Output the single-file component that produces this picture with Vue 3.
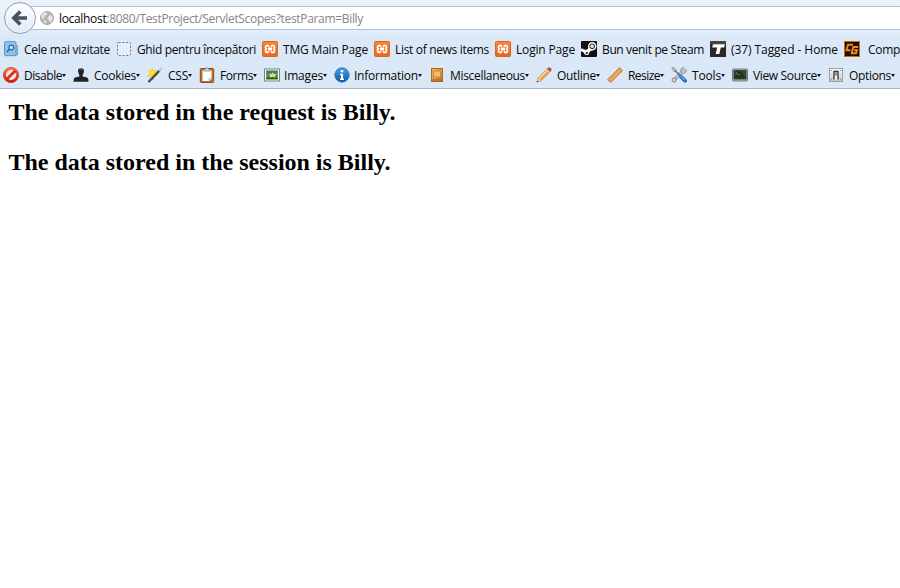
<script setup>
const bookmarks = [
  { icon: 'visited', label: 'Cele mai vizitate', pitch: 113, text: 86 },
  { icon: 'dashed', label: 'Ghid pentru începători', pitch: 146, text: 119 },
  { icon: 'xampp', label: 'TMG Main Page', pitch: 112, text: 85 },
  { icon: 'xampp', label: 'List of news items', pitch: 121, text: 94 },
  { icon: 'xampp', label: 'Login Page', pitch: 86, text: 59 },
  { icon: 'steam', label: 'Bun venit pe Steam', pitch: 129, text: 102 },
  { icon: 'tagged', label: '(37) Tagged - Home', pitch: 134, text: 107 },
  { icon: 'cg', label: 'Comp', pitch: 58, text: 32, gap: 8 },
]
const tools = [
  { icon: 'disable', label: 'Disable', pitch: 70, text: 38 },
  { icon: 'cookies', label: 'Cookies', pitch: 74, text: 42 },
  { icon: 'css', label: 'CSS', pitch: 52, text: 20 },
  { icon: 'forms', label: 'Forms', pitch: 65, text: 33 },
  { icon: 'images', label: 'Images', pitch: 70, text: 39, gap: 4 },
  { icon: 'info', label: 'Information', pitch: 95, text: 64, gap: 4 },
  { icon: 'misc', label: 'Miscellaneous', pitch: 107, text: 75 },
  { icon: 'outline', label: 'Outline', pitch: 71, text: 39 },
  { icon: 'resize', label: 'Resize', pitch: 64, text: 32 },
  { icon: 'tools', label: 'Tools', pitch: 61, text: 29 },
  { icon: 'source', label: 'View Source', pitch: 96, text: 64 },
  { icon: 'options', label: 'Options', pitch: 72, text: 42 },
]

// Tightens or loosens the tracking so a label fills its column width.
const vFit = {
  mounted(el, { value }) {
    const natural = el.getBoundingClientRect().width
    el.style.letterSpacing = `${(value - natural) / el.textContent.length}px`
  },
}
</script>

<template>
  <div class="window">
    <svg class="defs" width="0" height="0">
      <defs>
        <linearGradient id="orange" x2="0" y2="1"><stop stop-color="#f58a3c" /><stop offset="1" stop-color="#e8661b" /></linearGradient>
        <linearGradient id="red" x2="0" y2="1"><stop stop-color="#f47a5a" /><stop offset="1" stop-color="#d51f0c" /></linearGradient>
        <linearGradient id="blue" x2="0" y2="1"><stop stop-color="#4fa0e4" /><stop offset="1" stop-color="#0b55a9" /></linearGradient>
        <linearGradient id="wood" x2="1" y2="1"><stop stop-color="#f2b766" /><stop offset="1" stop-color="#c87820" /></linearGradient>
        <linearGradient id="silver" x2="0" y2="1"><stop stop-color="#fff" /><stop offset="1" stop-color="#bfc1c2" /></linearGradient>

        <symbol id="visited" viewBox="0 0 16 16">
          <path d="M12 4.500h2.500v9.500H12z" fill="#a9d1ee" stroke="#6fa9d5" />
          <rect x="1.500" y=".7" width="11.500" height="14" rx="1" fill="#8fc3e9" stroke="#5594c7" />
          <circle cx="8.300" cy="6.500" r="2.400" fill="#c5e3f7" stroke="#32689b" stroke-width="1.200" />
          <path d="M6.500 8.300L3.800 11" stroke="#32689b" stroke-width="1.600" />
        </symbol>
        <symbol id="dashed" viewBox="0 0 16 16">
          <rect x="1.500" y="1.500" width="13" height="13" rx="1" fill="#e5eef9" stroke="#75818f" stroke-dasharray="2.300 1.400" />
        </symbol>
        <symbol id="xampp" viewBox="0 0 16 16">
          <rect x=".5" y=".5" width="15" height="15" rx="1" fill="url(#orange)" stroke="#d9641e" />
          <path d="M6.600 6.200V5.500Q6.300 4.300 4.800 4.500Q3.300 4.900 3.500 6.500Q3.700 7.300 4.300 8Q3.700 8.700 3.500 9.500Q3.300 11.100 4.800 11.500Q6.300 11.700 6.600 10.500V9.800M9.400 6.200V5.500Q9.700 4.300 11.200 4.500Q12.700 4.900 12.500 6.500Q12.300 7.300 11.700 8Q12.300 8.700 12.500 9.500Q12.700 11.100 11.200 11.500Q9.700 11.700 9.400 10.500V9.800" fill="none" stroke="#fff" stroke-width="1.700" />
          <path d="M6 8H10" stroke="#fff" stroke-width="2.600" />
        </symbol>
        <symbol id="steam" viewBox="0 0 16 16">
          <rect width="16" height="16" rx="1" fill="#111" />
          <path d="M0 8.500L5.500 11" stroke="#fff" stroke-width="3" />
          <path d="M8 6L5 10.500L7.500 11.500L12 8.500Z" fill="#fff" />
          <circle cx="11.200" cy="5.200" r="3.500" fill="#111" stroke="#fff" stroke-width="1.500" />
          <circle cx="11.200" cy="5.200" r="1.900" fill="#ddd" />
          <circle cx="5.500" cy="11.300" r="2.200" fill="none" stroke="#fff" stroke-width="1.200" />
        </symbol>
        <symbol id="tagged" viewBox="0 0 16 16">
          <rect width="16" height="16" fill="#282828" /><path d="M0 0h16v3H0z" fill="#444" />
          <path d="M3 3.200h12l-.8 3.200h-3.400L9.300 13H5.700l1.500-6.600h-5z" fill="#fff" />
        </symbol>
        <symbol id="cg" viewBox="0 0 16 16">
          <rect x=".5" y=".5" width="15" height="15" fill="#17100a" stroke="#c96d0d" />
          <path d="M9 3.800H4L2.500 9.200H6.500M14.200 6H9.300L7.700 12.200H12L13 9.200H10.200" fill="none" stroke="#f18c16" stroke-width="1.900" />
        </symbol>
        <symbol id="disable" viewBox="0 0 16 16">
          <circle cx="8" cy="8" r="6.400" fill="#fbe9e5" stroke="url(#red)" stroke-width="2.700" />
          <path d="M3.700 12.300L12.300 3.700" stroke="#df2c18" stroke-width="2.700" />
          <circle cx="8" cy="8" r="7.600" fill="none" stroke="#be2b19" stroke-width=".6" />
        </symbol>
        <symbol id="cookies" viewBox="0 0 16 16">
          <path d="M5 3.500C5 .5 11 .5 11 3.500C11 6 10 7 9.700 8V9.500L14 10.500Q15.500 11 15.500 14.800H.5Q.5 11 2 10.500L6.300 9.500V8C6 7 5 6 5 3.500Z" fill="#242424" />
          <path d="M6.500 3.200Q8 1.500 9.500 3.200" fill="none" stroke="#555" />
        </symbol>
        <symbol id="css" viewBox="0 0 16 16">
          <path d="M5 .8l1.500 3 3.200-1-1.600 3.200 3 2-3.800.8L6 13 4 9.500 0 9.200 3 6.500 1.300 3l3.200.8z" fill="#ffdc3c" stroke="#f5b91c" stroke-width=".5" />
          <path d="M1.500 15L12.500 3.500" stroke="#38362e" stroke-width="2.300" />
          <path d="M12 4L14.800 1" stroke="#c9c9c4" stroke-width="2.300" />
          <path d="M1.500 14.500L10.500 4.700" stroke="#999" stroke-width=".6" />
        </symbol>
        <symbol id="forms" viewBox="0 0 16 16">
          <rect x="1.300" y="1.500" width="13.400" height="14" rx="1" fill="#c06e30" stroke="#91491b" />
          <path d="M3.500 3.500h9v8.500l-2.500 2H3.500z" fill="#fff" />
          <path d="M9.500 14v-3h3z" fill="#b8c4cf" />
          <path d="M5 4V2h1.700Q8-.8 9.300 2H11v2z" fill="#ddd" stroke="#777" stroke-width=".7" />
        </symbol>
        <symbol id="images" viewBox="0 0 16 16">
          <rect x=".5" y="2" width="15" height="12" fill="#f7f8f4" stroke="#7a8582" />
          <rect x="2.200" y="3.700" width="11.600" height="8.600" fill="#529034" />
          <path d="M2.200 3.700h11.600v2H2.200z" fill="#477b73" /><path d="M2.200 10.500h11.600v1.800H2.200z" fill="#2e611e" />
          <path d="M4.500 7l3 .2L8.500 5.500l1.200 1.700 2.800-.2-1.800 2 .5 1.300-2.700-.6-2.700.6.6-1.500z" fill="#e4ecc4" />
          <circle cx="8.500" cy="8.300" r=".9" fill="#d6bb35" />
        </symbol>
        <symbol id="info" viewBox="0 0 16 16">
          <circle cx="8" cy="8" r="7.200" fill="url(#blue)" stroke="#286cae" stroke-width=".8" />
          <circle cx="8" cy="4.300" r="1.300" fill="#fff" />
          <path d="M6 6.800h3v4.700h1V13H6v-1.500h1V8H6z" fill="#fff" />
        </symbol>
        <symbol id="misc" viewBox="0 0 16 16">
          <rect x="2.500" y="1.500" width="11" height="13" fill="url(#wood)" stroke="#a96b20" />
          <rect x="4.500" y="4" width="7" height="6" fill="#efbd71" stroke="#c4832f" stroke-width=".8" />
          <path d="M2.500 13h11" stroke="#9d601a" />
        </symbol>
        <symbol id="outline" viewBox="0 0 16 16">
          <path d="M1 15l1-4L12.300 1 15 3.700 4.500 14z" fill="#edaa46" stroke="#b96d29" stroke-width=".8" />
          <path d="M2.800 11.500L11.700 2.800" stroke="#ffe091" stroke-width="1.200" />
          <path d="M11 2l1.500-1.500Q14 0 15.300 1.600Q16 3 15 4l-1.200 1z" fill="#d83d42" />
          <path d="M10 3l3 3 1-1-3-3z" fill="#cbd0d8" /><path d="M2 11l2.500 3L1 15z" fill="#f6dcb1" /><path d="M1.300 13.500L2.500 14.600L.5 15.300z" fill="#333" />
        </symbol>
        <symbol id="resize" viewBox="0 0 16 16">
          <path d="M.7 12.500L12.500.7L15.500 3.700L3.700 15.500z" fill="#eaa85c" stroke="#bd7633" />
          <path d="M3.500 10.500l.8.800M5.500 8.500l.8.800M7.500 6.500l.8.800M9.500 4.500l.8.800M11.500 2.500l.8.800" stroke="#b87333" stroke-width=".6" />
        </symbol>
        <symbol id="tools" viewBox="0 0 16 16">
          <path d="M3.500 12.500L12 4" stroke="#6e7779" stroke-width="3" /><path d="M3.500 12.500L12 4" stroke="#d5d9db" stroke-width="1.600" />
          <path d="M15 2.500L12.900 4.300 11.500 2.800 13.300.8C10.500.2 9.200 2.500 10 4.500L12 6.300C14.500 6.500 16 4.500 15 2.500z" fill="#d5dadb" stroke="#6b7479" stroke-width=".7" />
          <circle cx="3" cy="13" r="2" fill="#dce0e2" stroke="#6b7479" stroke-width=".9" />
          <path d="M3.500 3L9.500 9" stroke="#656e74" stroke-width="1.500" />
          <path d="M1 1.300l1-1 2.700 2.200v1.900H3z" fill="#d3d8da" stroke="#656e74" stroke-width=".8" />
          <path d="M10 9.500L14 13.700" stroke="#1f63b4" stroke-width="3.800" stroke-linecap="round" /><path d="M10 9L13.700 13" stroke="#62aef0" stroke-width="1.500" stroke-linecap="round" />
        </symbol>
        <symbol id="source" viewBox="0 0 16 16">
          <rect x=".5" y="2" width="15" height="12" rx="1" fill="#aeb5b6" stroke="#737c7f" />
          <rect x="2" y="3.500" width="12" height="8.500" fill="#203426" stroke="#39443c" />
          <path d="M3.500 5l1.500 1-1.500 1M5.500 7.500h2" fill="none" stroke="#6cb548" stroke-width=".8" />
          <path d="M9 4h4.500v7z" fill="#3f5a3b" opacity=".6" />
        </symbol>
        <symbol id="options" viewBox="0 0 16 16">
          <rect x="1.500" y="1.500" width="13" height="13" fill="url(#silver)" stroke="#9a9fa3" />
          <path d="M6 12.500V4.500h4v8" fill="#f4f4f4" stroke="#333" stroke-width="1.300" />
          <path d="M7.200 5.500h1.600v3H7.200z" fill="#777" />
          <path d="M3 3.500h1M12 3.500h1M3 12.500h1M12 12.500h1" stroke="#888" />
        </symbol>
      </defs>
    </svg>

    <header class="chrome">
      <div class="nav">
        <button class="back" aria-label="Back">
          <svg width="18" height="18" viewBox="0 0 18 18">
            <path d="M9.300 2.500L2.800 9l6.500 6.500M3.500 9H16" fill="none" stroke="#465260" stroke-width="3.600" />
          </svg>
        </button>
        <div class="url">
          <svg class="globe" width="14" height="14" viewBox="0 0 14 14">
            <circle cx="7" cy="7" r="6.500" fill="#b4b4b4" stroke="#a5a5a5" />
            <path d="M2 3.500Q4 1 6 1.200L7.500 2.500L6 4.200 4.200 5 4.800 6.500 3.500 8 1 6.500zM8.500 5.500l2-1.500 2.300 2-.5 3-2 2.500L9 9.500 7.500 8zM4 9l2.500 1-.5 2.500-2-1z" fill="#e6e6e6" />
          </svg>
          <span v-fit="304" class="address"><b>localhost</b>:8080/TestProject/ServletScopes?testParam=Billy</span>
        </div>
      </div>

      <nav class="row bookmarks">
        <a v-for="b in bookmarks" :key="b.label" class="item" :style="{ width: b.pitch + 'px', columnGap: (b.gap || 5) + 'px' }">
          <svg width="16" height="16"><use :href="'#' + b.icon" /></svg>
          <span v-fit="b.text" class="label">{{ b.label }}</span>
        </a>
      </nav>
      <nav class="row tools">
        <a v-for="t in tools" :key="t.label" class="item" :style="{ width: t.pitch + 'px', columnGap: (t.gap || 5) + 'px' }">
          <svg width="16" height="16"><use :href="'#' + t.icon" /></svg>
          <span class="menu"><span v-fit="t.text" class="label">{{ t.label }}</span><i class="caret"></i></span>
        </a>
      </nav>
    </header>

    <main class="page">
      <h2 v-fit="387">The data stored in the request is Billy.</h2>
      <h2 v-fit="382">The data stored in the session is Billy.</h2>
    </main>
  </div>
</template>

<style>
body { margin: 0; background: #fff; }
</style>

<style scoped>
.window { width: 900px; height: 588px; overflow: hidden; background: #fff; }
.defs { display: block; position: absolute; }
.chrome {
  box-sizing: border-box; height: 89px; overflow: hidden;
  border-bottom: 1px solid #a5b6cd;
  background: linear-gradient(#eaf2fc 0, #e5eefa 29px, #dbe8f7 36px, #dae7f6 100%);
  font: 12px "Open Sans", "Noto Sans", sans-serif; color: #080808;
}
.nav { display: flex; height: 36px; padding: 2px 0 0 4px; box-sizing: border-box; }
.back {
  display: flex; align-items: center; justify-content: center; flex: none;
  box-sizing: border-box; width: 32px; height: 32px; padding: 0; z-index: 1;
  border: 1px solid #8e9eb3; border-radius: 50%;
  background: linear-gradient(#fcfdff, #e2eaf5); box-shadow: inset 0 0 0 1px #f5f9ff;
}
.url {
  display: flex; align-items: center; flex: 1; box-sizing: border-box;
  height: 24px; margin: 4px 0 0 -5px; padding-left: 9px; gap: 5px;
  border: solid #b0bfd4; border-width: 1px 0; background: #fff;
}
.globe { flex: none; }
.address { padding-top: 2px; white-space: nowrap; color: #858585; line-height: 20px; }
.address b { font-weight: 400; color: #080808; }
.row { display: flex; height: 26px; padding-left: 3px; }
.item { display: flex; align-items: center; flex: none; white-space: nowrap; }
.item svg { flex: none; }
.label { padding-top: 2px; line-height: 18px; }
.menu { display: flex; align-items: center; }
.caret { border: solid transparent; border-width: 3px 2.5px 0; border-top-color: #111; }
.page { padding: 9px 8.500px; }
h2 {
  width: max-content; margin: 0 0 22px; white-space: nowrap;
  font: bold 24px/28px "Liberation Serif", serif; color: #000;
}
</style>
